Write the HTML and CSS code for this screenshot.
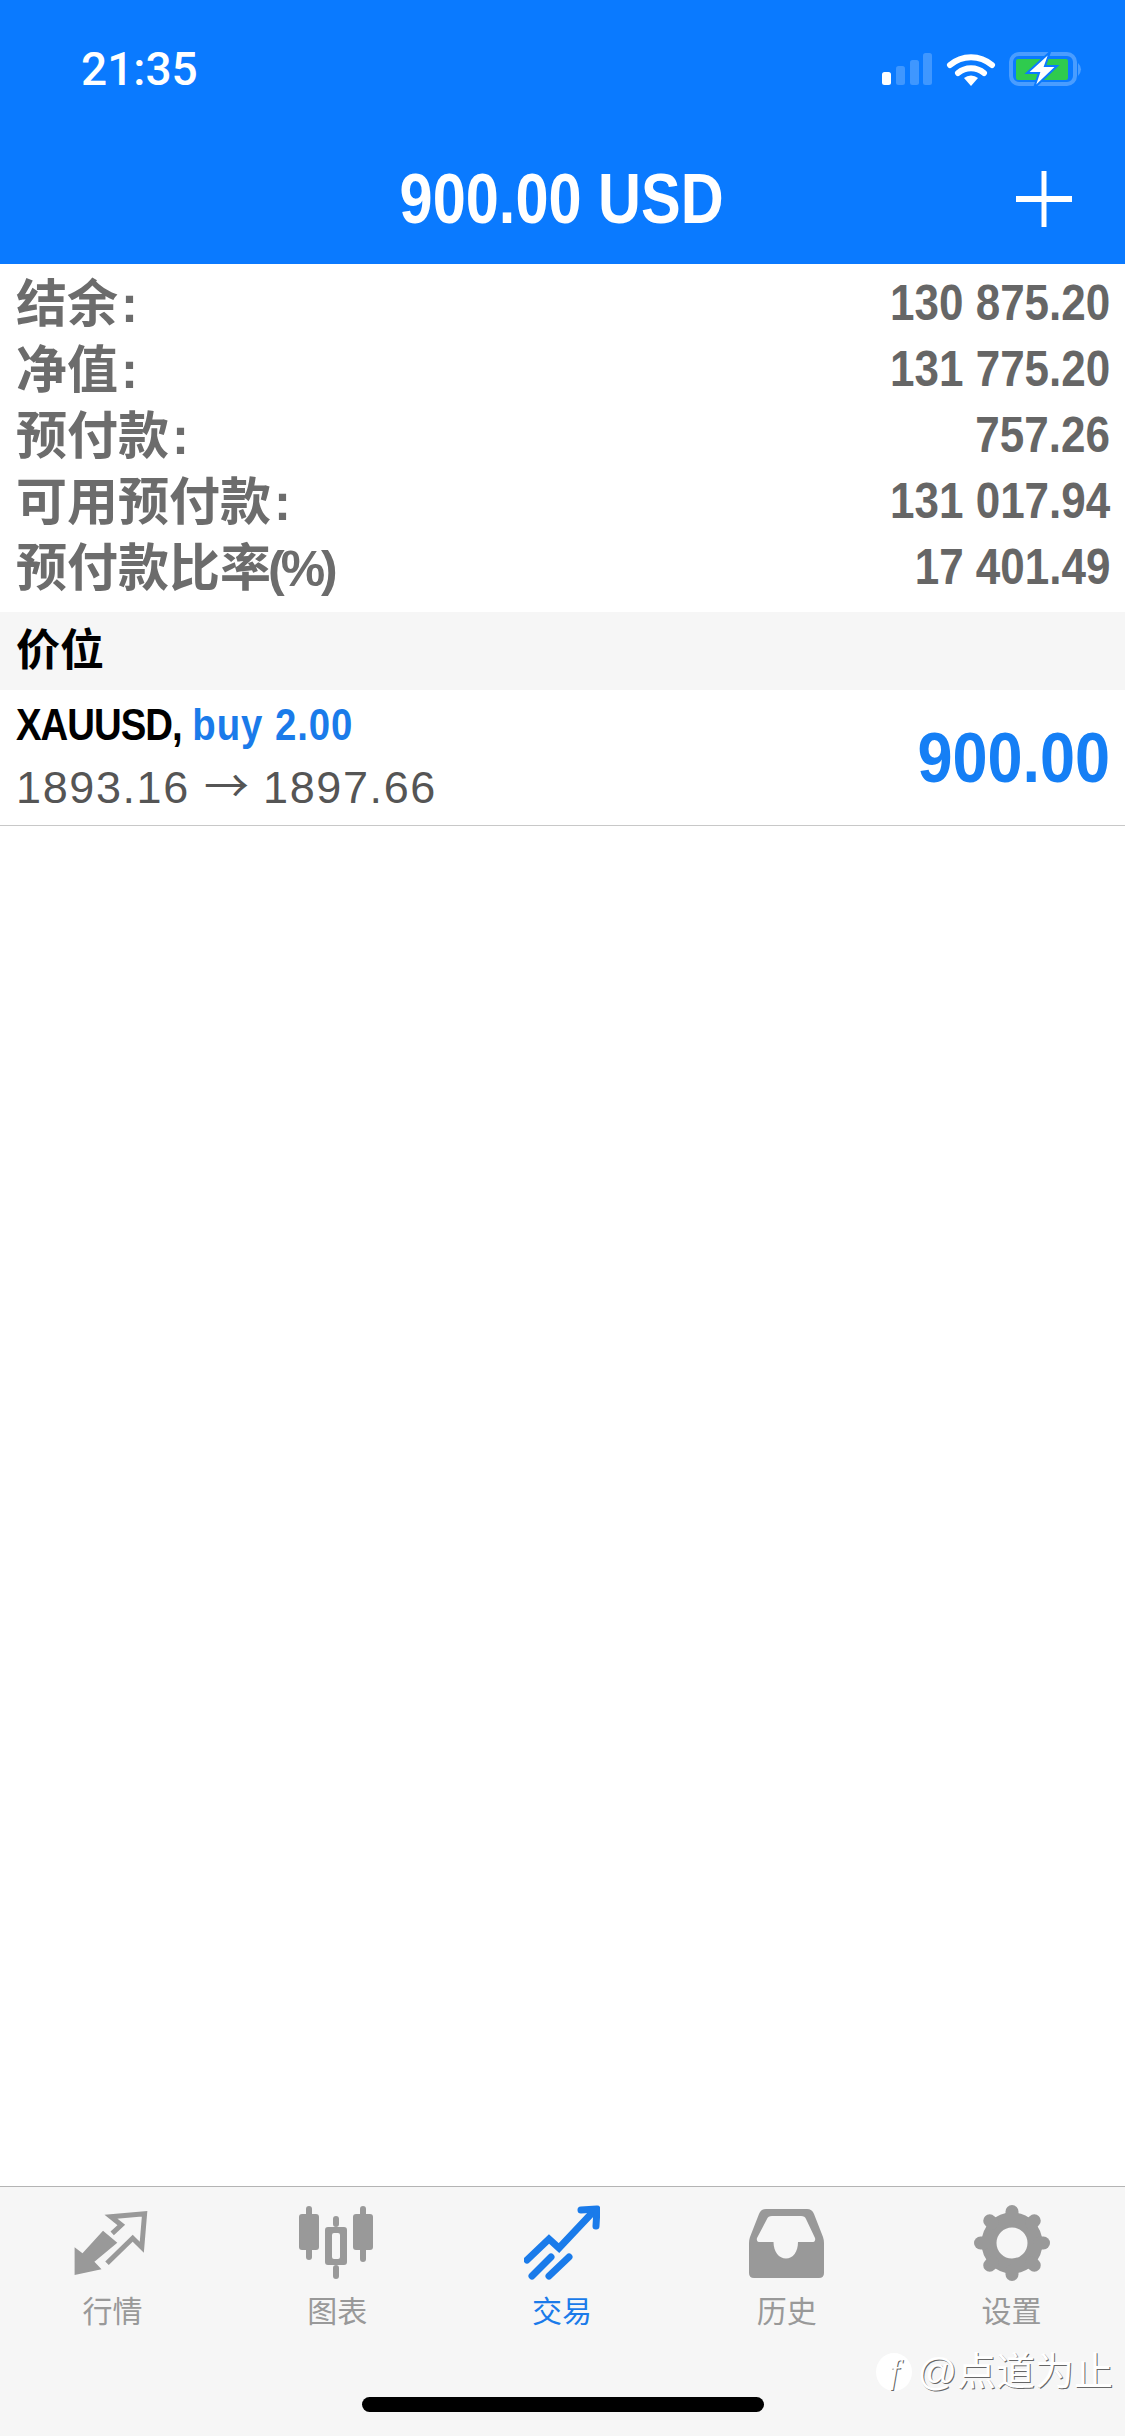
FILE: index.html
```html
<!DOCTYPE html>
<html lang="zh-CN">
<head>
    <meta charset="UTF-8">
    <meta name="viewport" content="width=device-width, initial-scale=1.0">
    <title>交易</title>
    <link rel="stylesheet" href="styles.css">
</head>
<body>
<div class="app">
    <header class="header">
        <div class="status">
            <span class="time">21:35</span>
            <svg class="status-icons" width="200" height="36" viewBox="0 0 200 36">
                <!-- signal -->
                <rect x="0" y="20" width="9" height="13" rx="2.5" fill="#fff"/>
                <rect x="14" y="14" width="9" height="19" rx="2.5" fill="#3f97ff"/>
                <rect x="28" y="8" width="9" height="25" rx="2.5" fill="#3f97ff"/>
                <rect x="41" y="1" width="9" height="32" rx="2.5" fill="#3f97ff"/>
                <!-- wifi -->
                <path d="M68 13 A32 32 0 0 1 110 13" fill="none" stroke="#fff" stroke-width="6" stroke-linecap="round"/>
                <path d="M76 21 A20 20 0 0 1 102 21" fill="none" stroke="#fff" stroke-width="6" stroke-linecap="round"/>
                <path d="M82 26 A11 11 0 0 1 96 26 L89 34 Z" fill="#fff"/>
                <!-- battery -->
                <rect x="129" y="2" width="64" height="30" rx="8" fill="none" stroke="#4a9dff" stroke-width="4"/>
                <rect x="134" y="7" width="52" height="21" rx="2" fill="#2fcb4e"/>
                <path d="M196 11 Q202 17 196 24 Z" fill="#4a9dff"/>
                <path d="M168 0 L145 21 L157 21 L152 36 L175 14 L163 14 Z" fill="#fff" stroke="#0a7aff" stroke-width="2"/>
            </svg>
        </div>
        <div class="nav">
            <span></span>
            <h1 class="title"><span class="squeeze">900.00 USD</span></h1>
            <svg class="plus" width="56" height="56" viewBox="0 0 56 56">
                <path d="M28 0 V56" stroke="#fff" stroke-width="5"/>
                <path d="M0 28 H56" stroke="#fff" stroke-width="6"/>
            </svg>
        </div>
    </header>

    <main class="content">
        <div class="summary">
            <div class="row"><span class="label">结余<i class="colon">:</i></span><span class="num">130 875.20</span></div>
            <div class="row"><span class="label">净值<i class="colon">:</i></span><span class="num">131 775.20</span></div>
            <div class="row"><span class="label">预付款<i class="colon">:</i></span><span class="num">757.26</span></div>
            <div class="row"><span class="label">可用预付款<i class="colon">:</i></span><span class="num">131 017.94</span></div>
            <div class="row"><span class="label">预付款比率<b class="pct">(%)</b></span><span class="num">17 401.49</span></div>
        </div>
        <div class="section">价位</div>
        <div class="position">
            <div class="pos-info">
                <div class="pos-head"><span class="symbol">XAUUSD,</span> <span class="side">buy 2.00</span></div>
                <div class="pos-price">1893.16 <span class="arrow">→</span> 1897.66</div>
            </div>
            <span class="profit">900.00</span>
        </div>
    </main>

    <nav class="tabbar">
        <div class="tabs">
            <div class="tab">
                <svg width="76" height="76" viewBox="0 0 76 76">
                    <path d="M0.6 70 V42.3 L8.5 48.3 L29 25.7 L43.3 37.7 L20.4 56.7 L27.5 64.3 Z" fill="#999"/>
                    <path d="M38.2 28.3 L47.3 20 L36.9 11.7 L70.6 8.7 L67.8 42.3 L58.7 33.3 L33 58.3" fill="none" stroke="#999" stroke-width="5"/>
                </svg>
                <span class="tab-label">行情</span>
            </div>
            <div class="tab">
                <svg width="76" height="76" viewBox="0 0 76 76" fill="#999">
                    <rect x="0" y="9" width="20" height="36" rx="3"/>
                    <rect x="7" y="1" width="6" height="54" rx="3"/>
                    <rect x="54" y="9" width="20" height="36" rx="3"/>
                    <rect x="61" y="1" width="6" height="56" rx="3"/>
                    <path fill-rule="evenodd" d="M29 22 H45 Q48 22 48 25 V57 Q48 60 45 60 H29 Q26 60 26 57 V25 Q26 22 29 22 Z M35 28 Q33 28 33 30 V52 Q33 54 35 54 H39 Q41 54 41 52 V30 Q41 28 39 28 Z"/>
                    <rect x="34" y="11" width="6" height="11" rx="3"/>
                    <rect x="34" y="60" width="6" height="14" rx="3"/>
                </svg>
                <span class="tab-label">图表</span>
            </div>
            <div class="tab tab-active">
                <svg width="76" height="76" viewBox="0 0 76 76" fill="none" stroke="#1a7bea" stroke-width="7" stroke-linecap="round">
                    <path d="M3 55 L25 34 L35 43 L68 8"/>
                    <path d="M57 5 L73 4 L72 21" stroke-linejoin="round"/>
                    <path d="M8 71 L27 52"/>
                    <path d="M25 71 L45 52"/>
                </svg>
                <span class="tab-label">交易</span>
            </div>
            <div class="tab">
                <svg width="76" height="76" viewBox="0 0 76 76">
                    <path fill="#999" fill-rule="evenodd" d="M17 4 H58 Q63 4 65 9 L74 32 Q75 35 75 38 V68 Q75 73 70 73 H5 Q0 73 0 68 V38 Q0 35 1 32 L10 9 Q12 4 17 4 Z M23 11 Q19 11 18 14 L8 33 Q7 37 11 37 H24.5 C24.5 47 30 53.5 37 53.5 C44 53.5 49 47 49 37 H63 Q67 37 66 33 L57 14 Q56 11 52 11 Z"/>
                </svg>
                <span class="tab-label">历史</span>
            </div>
            <div class="tab">
                <svg width="76" height="76" viewBox="0 0 76 76">
                    <circle cx="38" cy="38" r="23" fill="none" stroke="#999" stroke-width="15"/>
                    <g stroke="#999" stroke-width="13" stroke-linecap="round">
                        <path d="M38 10 V6.5"/>
                        <path d="M38 10 V6.5" transform="rotate(45 38 38)"/>
                        <path d="M38 10 V6.5" transform="rotate(90 38 38)"/>
                        <path d="M38 10 V6.5" transform="rotate(135 38 38)"/>
                        <path d="M38 10 V6.5" transform="rotate(180 38 38)"/>
                        <path d="M38 10 V6.5" transform="rotate(225 38 38)"/>
                        <path d="M38 10 V6.5" transform="rotate(270 38 38)"/>
                        <path d="M38 10 V6.5" transform="rotate(315 38 38)"/>
                    </g>
                </svg>
                <span class="tab-label">设置</span>
            </div>
        </div>
        <div class="home-bar"></div>
        <div class="watermark"><span class="wm-logo">f</span><span>@点道为止</span></div>
    </nav>
</div>
</body>
</html>
```

FILE: styles.css
```css
body {
    margin: 0;
    background-color: #fff;
    font-family: "Liberation Sans", "Noto Sans CJK SC", sans-serif;
}
.app {
    display: flex;
    flex-direction: column;
    height: 2436px;
    overflow: hidden;
}

/* header */
.header {
    height: 264px;
    background-color: #0a7aff;
    color: #fff;
}
.status {
    display: flex;
    justify-content: space-between;
    align-items: center;
    height: 36px;
    padding: 52px 43px 0 81px;
}
.time {
    margin-top: -3px;
    font-family: Roboto, sans-serif;
    font-size: 46px;
    font-weight: 500;
}
.nav {
    display: grid;
    grid-template-columns: 1fr auto 1fr;
    align-items: center;
    height: 56px;
    margin-top: 83px;
    padding: 0 53px 0 52px;
}
.plus {
    justify-self: end;
}
.title {
    margin: 0;
    font-size: 70px;
    line-height: 56px;
    font-weight: bold;
    white-space: nowrap;
}
.squeeze {
    display: inline-block;
    transform: scaleX(0.85);
}

/* account summary */
.content {
    flex: 1;
}
.summary {
    padding: 6px 0 12px;
}
.row {
    display: flex;
    justify-content: space-between;
    align-items: center;
    height: 66px;
    padding: 0 15px 0 16px;
    font-size: 50px;
    color: #666;
}
.label {
    margin-top: -6px;
    font-size: 51px;
    font-weight: bold;
    color: #6c6c6c;
}
.colon {
    margin-left: 3px;
    font-style: normal;
    font-weight: bold;
}
.pct {
    margin-left: -3px;
    font-size: 50px;
    letter-spacing: -4px;
}
.num {
    display: inline-block;
    font-weight: bold;
    white-space: pre;
    transform: scaleX(0.88);
    transform-origin: right center;
}
.section {
    height: 78px;
    padding-left: 16px;
    background-color: #f6f6f6;
    color: #000;
    font-size: 44px;
    font-weight: bold;
    line-height: 78px;
}

/* open position */
.position {
    display: flex;
    justify-content: space-between;
    align-items: center;
    box-sizing: border-box;
    height: 136px;
    padding: 0 15px 0 16px;
    border-bottom: 1px solid #c8c8c8;
}
.pos-info {
    align-self: flex-start;
    padding-top: 5px;
}
.pos-head {
    height: 60px;
    font-size: 45px;
    font-weight: bold;
    line-height: 60px;
    white-space: nowrap;
    transform: scaleX(0.853);
    transform-origin: left center;
}
.symbol {
    color: #000;
    letter-spacing: -1.2px;
}
.side {
    color: #1a7bea;
    letter-spacing: 1.1px;
}
.pos-price {
    font-size: 45px;
    line-height: 66px;
    letter-spacing: 1.6px;
    color: #555;
    white-space: nowrap;
}
.arrow {
    font-family: "Noto Sans CJK SC", sans-serif;
    line-height: 0;
    letter-spacing: 0;
}
.profit {
    display: inline-block;
    font-size: 70px;
    font-weight: bold;
    color: #157ff5;
    transform: scaleX(0.9);
    transform-origin: right center;
}

/* bottom tabs */
.tabbar {
    position: relative;
    height: 250px;
    box-sizing: border-box;
    padding-top: 18px;
    background-color: #f6f6f6;
    border-top: 1px solid #b4b4b4;
}
.tabs {
    display: grid;
    grid-template-columns: repeat(5, 1fr);
    padding-right: 1px;
}
.tab {
    display: flex;
    flex-direction: column;
    align-items: center;
    color: #999;
}
.tab svg {
    display: block;
}
.tab-label {
    margin-top: 16px;
    font-size: 30px;
    line-height: 30px;
}
.tab-active {
    color: #1a7bea;
}
.home-bar {
    width: 402px;
    height: 15px;
    margin: 70px auto 0;
    background-color: #000;
    border-radius: 8px;
}
.watermark {
    position: absolute;
    right: 12px;
    bottom: 44px;
    display: flex;
    align-items: center;
    gap: 5px;
    font-size: 39px;
    line-height: 40px;
    color: #fff;
    text-shadow: 1px 1px 0 #666;
}
.wm-logo {
    width: 36px;
    height: 38px;
    border-radius: 50%;
    background-color: #fff;
    font-family: "Liberation Serif", serif;
    font-style: italic;
    font-size: 34px;
    line-height: 38px;
    text-align: center;
}
```
